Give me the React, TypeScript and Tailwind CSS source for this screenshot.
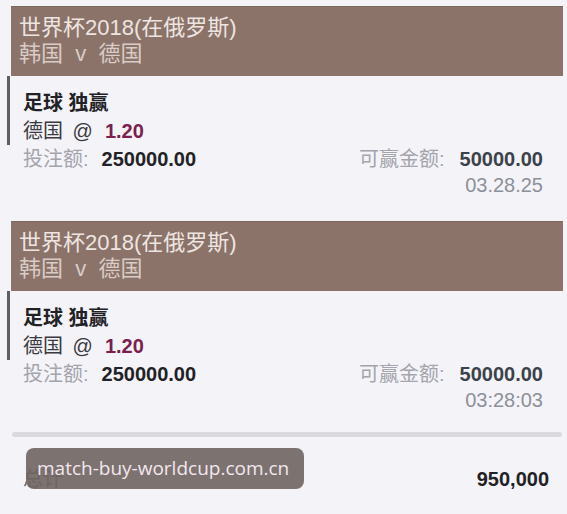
import React from "react";

type Bet = {
  league: string;
  match: string;
  market: string;
  pick: string;
  odds: string;
  stake: string;
  payout: string;
  time: string;
};

const bets: Bet[] = [
  {
    league: "世界杯2018(在俄罗斯)",
    match: "韩国  v  德国",
    market: "足球 独赢",
    pick: "德国",
    odds: "1.20",
    stake: "250000.00",
    payout: "50000.00",
    time: "03.28.25",
  },
  {
    league: "世界杯2018(在俄罗斯)",
    match: "韩国  v  德国",
    market: "足球 独赢",
    pick: "德国",
    odds: "1.20",
    stake: "250000.00",
    payout: "50000.00",
    time: "03:28:03",
  },
];

function BetCard({ bet }: { bet: Bet }) {
  return (
    <div className="mb-[24px]">
      <div className="ml-[11px] mr-[4px] h-[70px] bg-[#8b736a] border-t border-[#7a6860] px-[8px] pt-[8px] text-[22px] leading-[26px] whitespace-pre">
        <p className="text-[#eee5e1]">{bet.league}</p>
        <p className="text-[#d9cbc5]">{bet.match}</p>
      </div>
      <div className="ml-[7px] border-l-[3px] border-[#5e5e62] pl-[13px] pt-[13px] text-[20px] leading-[28px]">
        <p className="font-bold text-[#222226]">{bet.market}</p>
        <p className="text-[#3a3a40]">
          {bet.pick} <span className="ml-[4px]">@</span>
          <span className="ml-[12px] font-bold text-[#7a1f4e]">{bet.odds}</span>
        </p>
      </div>
      <div className="flex justify-between pl-[23px] pr-[24px] text-[20px] leading-[28px]">
        <p>
          <span className="text-[#a4a4ac]">投注额:</span>
          <span className="ml-[13px] font-bold text-[#222226]">{bet.stake}</span>
        </p>
        <p>
          <span className="text-[#a4a4ac]">可赢金额:</span>
          <span className="ml-[15px] font-bold text-[#3b424a]">{bet.payout}</span>
        </p>
      </div>
      <p className="pr-[24px] text-right text-[20px] leading-[24px] text-[#8d9098]">{bet.time}</p>
    </div>
  );
}

export default function App() {
  return (
    <div
      className="relative w-[567px] h-[514px] overflow-hidden bg-[#f3f3f8]"
      style={{ fontFamily: '"Liberation Sans", "Noto Sans CJK SC", sans-serif' }}
    >
      <div className="pt-[6px]">
        {bets.map((b, i) => (
          <BetCard key={i} bet={b} />
        ))}
      </div>

      <div className="ml-[12px] mr-[5px] mt-[-4px] h-[5px] rounded-full bg-[#dadade]" />

      <div className="flex justify-between items-center pl-[23px] pr-[18px] pt-[28px] text-[20px] leading-[28px]">
        <p className="text-[#6a6a70]">总计</p>
        <p className="font-bold text-[#222226]">950,000</p>
      </div>

      {/* source stamp over the totals row */}
      <div
        className="absolute left-[26px] top-[448px] h-[41px] w-[278px] rounded-[8px] bg-[#6f6460]/90 pl-[11px] text-[19px] leading-[41px] text-[#f3e6ee]"
        style={{ fontFamily: '"Open Sans", "DejaVu Sans", sans-serif' }}
      >
        match-buy-worldcup.com.cn
      </div>
    </div>
  );
}
